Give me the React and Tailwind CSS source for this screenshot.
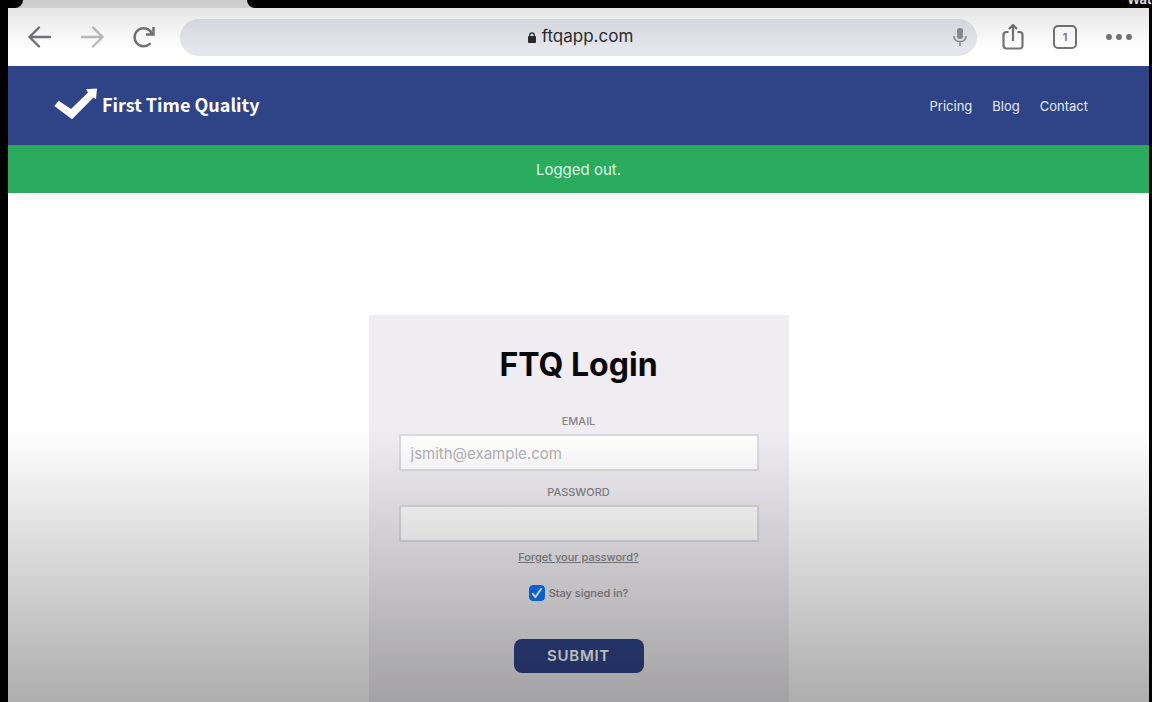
import { useState } from "react";

const NAV_LINKS = ["Pricing", "Blog", "Contact"];

const ArrowIcon = ({ flip }) => (
  <svg width="24" height="22" viewBox="0 0 24 22" fill="none" stroke="currentColor" strokeWidth="2.400" strokeLinecap="round" strokeLinejoin="round" className={flip ? "rotate-180" : ""} aria-hidden="true">
    <path d="M22 11H1.500M11 1.500 1.500 11l9.500 9.500" />
  </svg>
);

const ReloadIcon = () => (
  <svg width="24" height="24" viewBox="0 0 24 24" fill="none" stroke="currentColor" strokeWidth="2.500" aria-hidden="true">
    <path d="M17.800 18.800A9 9 0 1 1 19.800 8.500" strokeLinecap="round" />
    <path d="M21.500 2v7.500h-7.500" />
  </svg>
);

const LockIcon = () => (
  <svg width="8" height="11" viewBox="0 0 8 11" aria-hidden="true">
    <rect y="4" width="8" height="7" rx="1" fill="currentColor" />
    <path d="M1.800 5V3a2.200 2.200 0 0 1 4.400 0v2" fill="none" stroke="currentColor" strokeWidth="1.300" />
  </svg>
);

const MicIcon = () => (
  <svg width="14" height="20" viewBox="0 0 14 20" aria-hidden="true">
    <rect x="4" y="1" width="6" height="11" rx="2.500" fill="currentColor" />
    <path d="M1 9c0 3.600 2.600 5.600 6 5.600S13 12.600 13 9M7 14.600V19" fill="none" stroke="currentColor" strokeWidth="1.800" />
  </svg>
);

const ShareIcon = () => (
  <svg width="22" height="28" viewBox="0 0 22 28" fill="none" stroke="currentColor" strokeWidth="2.200" strokeLinejoin="round" aria-hidden="true">
    <path d="M6.500 9H4.500A3 3 0 0 0 1.500 12v10.500a3 3 0 0 0 3 3h13a3 3 0 0 0 3-3V12a3 3 0 0 0-3-3h-2" />
    <path d="M11 18V3M7 6l4-4 4 4" />
  </svg>
);

const DotsIcon = () => (
  <svg width="26" height="6" viewBox="0 0 26 6" fill="currentColor" aria-hidden="true">
    <circle cx="3" cy="3" r="2.900" />
    <circle cx="13" cy="3" r="2.900" />
    <circle cx="23" cy="3" r="2.900" />
  </svg>
);

const LogoMark = () => (
  <svg width="43" height="32" viewBox="0 0 43 32" fill="currentColor" aria-hidden="true">
    <path d="M.3 18 4.700 12.700 17 21 34 4.500 32 1.200 43 .5 42 11.300 39.500 9.500 18 31.300Z" />
  </svg>
);

function TabStrip() {
  return (
    <div className="flex h-2 justify-between bg-[#e6e6e7]">
      <div className="w-[23px] rounded-br-lg bg-black" />
      <div className="ml-56 flex flex-1 items-end justify-end overflow-hidden rounded-bl-lg bg-black">
        <span className="w-[25px] whitespace-nowrap text-[13px] font-semibold leading-[18px] text-white">Watch</span>
      </div>
    </div>
  );
}

function Toolbar() {
  return (
    <div className="flex h-[58px] items-center bg-white pl-5 pr-[17px] text-[#737477]">
      <div className="flex items-center gap-7">
        <button type="button" aria-label="Back"><ArrowIcon /></button>
        <button type="button" aria-label="Forward" className="text-[#bcbcbe]"><ArrowIcon flip /></button>
        <button type="button" aria-label="Reload"><ReloadIcon /></button>
      </div>
      <div className="ml-6 flex h-[37px] flex-1 items-center rounded-full bg-[#e5e6ec] pl-7 pr-2.5">
        <div className="flex flex-1 items-center justify-center gap-1.5 text-[17px] text-[#2a2a2d]">
          <LockIcon />
          <span>ftqapp.com</span>
        </div>
        <button type="button" aria-label="Voice search" className="text-[#8d8e94]"><MicIcon /></button>
      </div>
      <div className="ml-[25px] flex items-center gap-[29px]">
        <button type="button" aria-label="Share"><ShareIcon /></button>
        <button type="button" aria-label="Tabs" className="flex size-6 items-center justify-center rounded-[5px] border-2 border-[#737477] text-[11px] font-semibold">1</button>
        <button type="button" aria-label="More"><DotsIcon /></button>
      </div>
    </div>
  );
}

function SiteHeader() {
  return (
    <header className="flex h-[79px] items-center justify-between bg-[#2f4487] pl-[46px] pr-[61px] text-white">
      <a href="#home" className="flex items-center gap-[5px] pb-[3px] font-['Noto_Sans_CJK_JP',sans-serif] text-lg font-bold leading-6">
        <LogoMark />
        First Time Quality
      </a>
      <nav className="flex gap-5 pt-[3px] text-[13px] text-[#e4e9f5]">
        {NAV_LINKS.map((label) => (
          <a key={label} href={`#${label.toLowerCase()}`}>{label}</a>
        ))}
      </nav>
    </header>
  );
}

function LoginForm() {
  const [email, setEmail] = useState("");
  const [password, setPassword] = useState("");
  const [stay, setStay] = useState(true);

  return (
    <form onSubmit={(e) => e.preventDefault()} className="flex w-full max-w-[420px] flex-col items-center bg-[#efedf1] px-[30px] pb-7 pt-[30px] text-[#858488]">
      <h1 className="text-[32px] font-bold leading-10 text-[#09090b]">FTQ Login</h1>

      <label htmlFor="email" className="mt-7 text-[11px] font-medium leading-4">EMAIL</label>
      <input
        id="email"
        type="email"
        value={email}
        onChange={(e) => setEmail(e.target.value)}
        placeholder="jsmith@example.com"
        className="mt-[5px] h-[37px] w-full border-2 border-[#dadbdd] bg-white px-2.5 pt-0.5 text-[15px] text-black placeholder:text-[#b2b2b5]"
      />

      <label htmlFor="password" className="mt-[13px] text-[11px] font-medium leading-4">PASSWORD</label>
      <input
        id="password"
        type="password"
        value={password}
        onChange={(e) => setPassword(e.target.value)}
        className="mt-[5px] h-[37px] w-full border-2 border-[#dadbdd] bg-white px-2.5 pt-0.5 text-[15px] text-black"
      />

      <a href="#forgot" className="mt-[7px] text-[11px] font-medium leading-4 underline">Forget your password?</a>

      <label className="mt-5 flex items-center gap-1 text-[11px] font-medium leading-4">
        <span className="relative flex size-4">
          <input
            type="checkbox"
            checked={stay}
            onChange={(e) => setStay(e.target.checked)}
            className="size-4 appearance-none rounded border border-[#99999c] bg-white checked:border-[#0a78ff] checked:bg-[#0a78ff]"
          />
          {stay && (
            <svg viewBox="0 0 16 16" fill="none" stroke="white" strokeWidth="2" strokeLinecap="round" strokeLinejoin="round" className="pointer-events-none absolute inset-0" aria-hidden="true">
              <path d="m3.800 8.800 2.700 3.200 5.500-8" />
            </svg>
          )}
        </span>
        Stay signed in?
      </label>

      <button type="submit" className="mt-[38px] h-[34px] w-[130px] rounded-lg bg-[#2f4487] text-[15px] font-semibold tracking-wider text-white">
        SUBMIT
      </button>
    </form>
  );
}

export default function App() {
  return (
    <div className="relative flex h-screen flex-col overflow-hidden bg-black font-['Inter',sans-serif]">
      <TabStrip />
      <div className="ml-2 mr-[3px] flex flex-1 flex-col bg-white">
        <Toolbar />
        <SiteHeader />
        <p role="status" className="bg-[#2bab5e] pb-[11px] pt-[13px] text-center text-[15px] leading-6 text-[#d8f8e2]">Logged out.</p>
        <main className="flex flex-1 justify-center pt-[122px]">
          <LoginForm />
        </main>
      </div>

      {/* player shading */}
      <div className="pointer-events-none absolute inset-x-0 top-0 h-12 bg-linear-to-b from-black/12 to-transparent" />
      <div className="pointer-events-none absolute inset-x-0 bottom-0 h-[274px] bg-linear-to-b from-transparent to-black/32" />
    </div>
  );
}
